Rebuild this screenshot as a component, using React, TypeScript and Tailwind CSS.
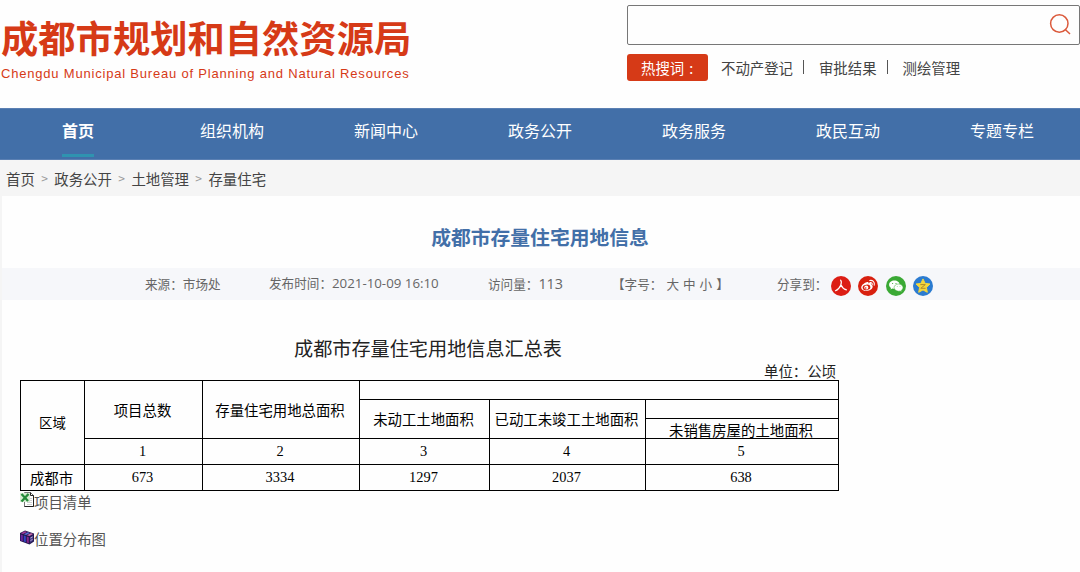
import type { ReactNode } from "react";

const navItems = ["首页", "组织机构", "新闻中心", "政务公开", "政务服务", "政民互动", "专题专栏"];
const crumbs = ["首页", "政务公开", "土地管理", "存量住宅"];
const hotWords = ["不动产登记", "审批结果", "测绘管理"];

function Header() {
  return (
    <header className="flex h-[108px] justify-between">
      <div className="pt-[15px] pl-px text-[#d63a17]">
        <h1 className="h-[44px] text-[37.3px] leading-[44px] font-bold whitespace-nowrap">成都市规划和自然资源局</h1>
        <p className="mt-[7px] font-['Liberation_Sans',sans-serif] text-[13px] leading-4 tracking-[0.8px] whitespace-nowrap">
          Chengdu Municipal Bureau of Planning and Natural Resources
        </p>
      </div>
      <div className="w-[453px] pt-[5px]">
        <div className="flex h-10 items-center justify-end rounded-xs border border-[#777] pr-[7px]">
          <svg className="h-6 w-6" viewBox="0 0 24 24" fill="none" stroke="#db5a3c" strokeWidth="1.5">
            <circle cx="11.3" cy="10.5" r="8.7" />
            <path d="M17.5 16.700l4.500 4.300" />
          </svg>
        </div>
        <div className="mt-[9px] flex h-[27px] items-center text-[14.4px] text-[#444]">
          <span className="flex h-[27px] w-[81px] items-center rounded-[3px] bg-[#d63a17] pl-[14px] text-white">
            热搜词<span className="pl-[5px]">:</span>
          </span>
          <div className="flex items-center pl-[13px]">
            {hotWords.map((word, i) => (
              <span key={word} className="flex items-center">
                {i > 0 && <span className="mr-[15px] ml-[10px] h-[14px] w-px bg-[#555]" />}
                {word}
              </span>
            ))}
          </div>
        </div>
      </div>
    </header>
  );
}

function Nav() {
  return (
    <nav className="flex h-[52px] border-y border-[#5b80b3] bg-[#426fa8] px-px">
      {navItems.map((item, i) => (
        <a key={item} className="flex w-[154px] flex-col items-center text-base leading-6 text-white">
          <span className={i === 0 ? "mt-[9px] font-bold" : "mt-[9px]"}>{item}</span>
          {i === 0 && <span className="mt-[12px] h-[3px] w-8 bg-[#2f93b0]" />}
        </a>
      ))}
    </nav>
  );
}

function ShareIcon({ color, children }: { color: string; children: ReactNode }) {
  return (
    <svg className="h-5 w-5" viewBox="0 0 20 20">
      <circle cx="10" cy="10" r="10" fill={color} />
      {children}
    </svg>
  );
}

function ShareIcons() {
  return (
    <div className="flex items-center pt-[3px]">
      <ShareIcon color="#dc1d14">
        <path d="M9.6 4.2c1.2 1.2.8 3.2.1 5C8.700 11.700 7 13.700 4.500 14.700M9.900 8.800c1 2.400 2.800 4.300 5.500 5.100" fill="none" stroke="#fff" strokeWidth="1.2" strokeLinecap="round" />
      </ShareIcon>
      <span className="w-[7px]" />
      <ShareIcon color="#d8200f">
        <path d="M8.600 6.200c1.300-.6 2.300-.1 1.900 1.200 2-.8 3.200-.1 2.700 1.300 3 1.100 1.400 5.600-4 6.100-3.300.3-6-1.200-6-3.400 0-2 3-4.500 5.400-5.200z" fill="#fff" />
        <ellipse cx="8.500" cy="11.400" rx="3.900" ry="2.700" fill="#d8200f" transform="rotate(-9 8.500 11.400)" />
        <circle cx="8.300" cy="11.500" r="2" fill="#fff" />
        <circle cx="7.700" cy="12" r=".8" fill="#d8200f" />
        <path d="M11.700 4.500c3-.7 5.300 1.700 4.500 4.600M12 6.600c1.600-.3 2.500.8 2.200 2.100" fill="none" stroke="#fff" strokeWidth="1.100" strokeLinecap="round" />
      </ShareIcon>
      <span className="w-2" />
      <ShareIcon color="#3aa935">
        <path d="M8.400 4.600c-3 0-5.300 1.800-5.300 4.100 0 1.300.7 2.400 1.900 3.200l-.5 1.600 1.900-1c.6.2 1.300.3 2 .3 3 0 5.300-1.800 5.300-4.100s-2.400-4.100-5.300-4.100z" fill="#fff" />
        <path d="M12.600 8c-2.600 0-4.500 1.600-4.500 3.600s1.900 3.600 4.500 3.600c.5 0 1-.1 1.500-.2l1.600.8-.4-1.400c1.100-.7 1.700-1.700 1.700-2.800 0-2-1.900-3.600-4.400-3.600z" fill="#fff" stroke="#3aa935" strokeWidth=".5" />
        <g fill="#3aa935">
          <circle cx="6.600" cy="7.500" r=".6" />
          <circle cx="10" cy="7.500" r=".6" />
          <circle cx="11.200" cy="10.700" r=".4" />
          <circle cx="14" cy="10.700" r=".4" />
        </g>
      </ShareIcon>
      <span className="w-[7px]" />
      <ShareIcon color="#2b7bd0">
        <path d="M10 2.900l2.100 4.500 4.900.6-3.600 3.400.9 4.900-4.300-2.400-4.300 2.400.9-4.900L3 8l4.900-.6z" fill="#f3d63c" strokeLinejoin="round" stroke="#f3d63c" strokeWidth="1" />
        <path d="M7.300 8.600h5l-4.500 3.700h4.800" fill="none" stroke="#b08a28" strokeWidth="1" />
      </ShareIcon>
    </div>
  );
}

function MetaBar() {
  return (
    <div className="flex h-8 items-center bg-[#f6f7fa] pl-[143px] text-[12.6px] whitespace-nowrap text-[#666]">
      <span className="w-[124px]">来源：市场处</span>
      <span className="w-[219px]">
        发布时间：<span className="font-['Open_Sans',sans-serif] text-[13.3px]">2021-10-09 16:10</span>
      </span>
      <span className="w-[124px]">
        访问量：<span className="font-['Open_Sans',sans-serif] text-[14.4px]">113</span>
      </span>
      <span className="flex w-[165px]">
        【字号：<span className="flex gap-[4px] pl-[4px]"><i className="not-italic">大</i><i className="not-italic">中</i><i className="not-italic">小</i></span>
        <span className="pl-[4px]">】</span>
      </span>
      <span className="w-[54px]">分享到：</span>
      <ShareIcons />
    </div>
  );
}

function SummaryTable() {
  const num = "border border-black p-0 pr-[2px] text-center font-['Liberation_Serif',serif] text-[14.4px]";
  const cell = "border border-black p-0 pr-[2px] text-center font-normal";
  return (
    <table className="w-[819px] table-fixed border-collapse text-[14.4px] leading-[18px] whitespace-nowrap text-black">
      <colgroup>
        <col className="w-[64px]" />
        <col className="w-[118px]" />
        <col className="w-[157px]" />
        <col className="w-[130px]" />
        <col className="w-[156px]" />
        <col className="w-[193px]" />
      </colgroup>
      <tbody>
        <tr className="h-[19px]">
          <th rowSpan={4} className="border border-black p-0 pb-[2px] text-center text-[13.4px] font-normal">区域</th>
          <th rowSpan={3} className={cell}>项目总数</th>
          <th rowSpan={3} className={cell}>存量住宅用地总面积</th>
          <th colSpan={3} className={cell} />
        </tr>
        <tr className="h-[19px]">
          <th rowSpan={2} className={cell}>未动工土地面积</th>
          <th rowSpan={2} className={cell}>已动工未竣工土地面积</th>
          <th className={cell} />
        </tr>
        <tr className="h-[20px]">
          <th className={cell}><div className="h-[18px] leading-[19px]">未销售房屋的土地面积</div></th>
        </tr>
        <tr className="h-[26px]">
          {[1, 2, 3, 4, 5].map((n) => (
            <td key={n} className={`${num} pb-[2px]`}>{n}</td>
          ))}
        </tr>
        <tr className="h-[26px]">
          <td className={cell}>成都市</td>
          {[673, 3334, 1297, 2037, 638].map((n) => (
            <td key={n} className={`${num} pb-[2px]`}>{n}</td>
          ))}
        </tr>
      </tbody>
    </table>
  );
}

function ExcelIcon() {
  return (
    <svg className="mb-[5px] h-[15px] w-[14px] shrink-0" viewBox="0 0 14 15">
      <path d="M4.500.5h6l3 3v11h-9z" fill="#fff" stroke="#777" />
      <path d="M10.500.5v3h3M13.500 3.500v11h-9" fill="none" stroke="#222" />
      <path d="M7 6.500h5M7 8.500h5M7 10.500h5M7 12.500h5" stroke="#bbb" strokeWidth=".7" />
      <rect y="1" width="10" height="9" fill="#d5ecd2" />
      <path d="M1.500 2l6.500 7M8.500 2L1.500 9.500" stroke="#258a39" strokeWidth="2.300" />
    </svg>
  );
}

function ArchiveIcon() {
  return (
    <svg className="mb-[3px] h-[15px] w-[14px] shrink-0" viewBox="0 0 14 15">
      <path d="M0 3l5-2.500 9 3v8L9.500 14.500 0 11z" fill="#251750" />
      <path d="M1 3.300L5 1.300l2 .7-4 2z" fill="#a83c9d" />
      <path d="M4 4.200l4-1.900 2 .7-4 2z" fill="#5870d8" />
      <path d="M7 5.200l4-1.900 2 .6-3.500 2z" fill="#c76caf" />
      <path d="M.8 4.500l2 .7v6l-2-.8z" fill="#6d24a0" />
      <path d="M3.800 5.500l2 .7v6l-2-.8z" fill="#3143c4" />
      <path d="M6.800 6.600l2 .7v6l-2-.8z" fill="#87248b" />
      <path d="M10 7.300l3-1.700v5l-3 2.200z" fill="#45418e" />
      <path d="M10.500 8l2-1M10.500 10.500l2-1" fill="none" stroke="#d8b5d7" strokeWidth=".8" />
    </svg>
  );
}

export default function App() {
  return (
    <div
      lang="zh-CN"
      className="h-[572px] w-[1080px] overflow-hidden bg-[#fefefe] font-['Noto_Sans_CJK_SC',sans-serif]"
    >
      <Header />
      <Nav />
      <div className="h-[412px] bg-[#f5f5f5] pl-[2px]">
        <div className="flex h-9 items-center gap-[5px] pt-px pl-1 text-[14.4px] text-[#444]">
          {crumbs.map((crumb, i) => (
            <span key={crumb} className="flex items-center gap-[5px]">
              {i > 0 && <span className="w-[9.5px] text-center text-[12px] text-[#999]">&gt;</span>}
              {crumb}
            </span>
          ))}
        </div>
        <main className="h-[376px] bg-[#fefefe]">
          <h2 className="h-[72px] pt-[25px] pr-[2px] text-center text-[19.8px] leading-8 font-bold text-[#426fa8]">
            成都市存量住宅用地信息
          </h2>
          <MetaBar />
          <section className="w-[837px] pt-[34px] pl-[18px]">
            <h3 className="h-7 pr-[3px] text-center text-[19.15px] leading-7 text-[#222]">成都市存量住宅用地信息汇总表</h3>
            <p className="h-[18px] pr-[3px] text-right text-[14.4px] leading-[18px] text-[#222]">单位：公顷</p>
            <SummaryTable />
            <a className="flex h-[22px] items-center text-[14.4px] leading-5 text-[#555]">
              <ExcelIcon />
              项目清单
            </a>
            <a className="mt-[15px] flex h-[22px] items-center text-[14.4px] leading-5 text-[#555]">
              <ArchiveIcon />
              位置分布图
            </a>
          </section>
        </main>
      </div>
    </div>
  );
}
